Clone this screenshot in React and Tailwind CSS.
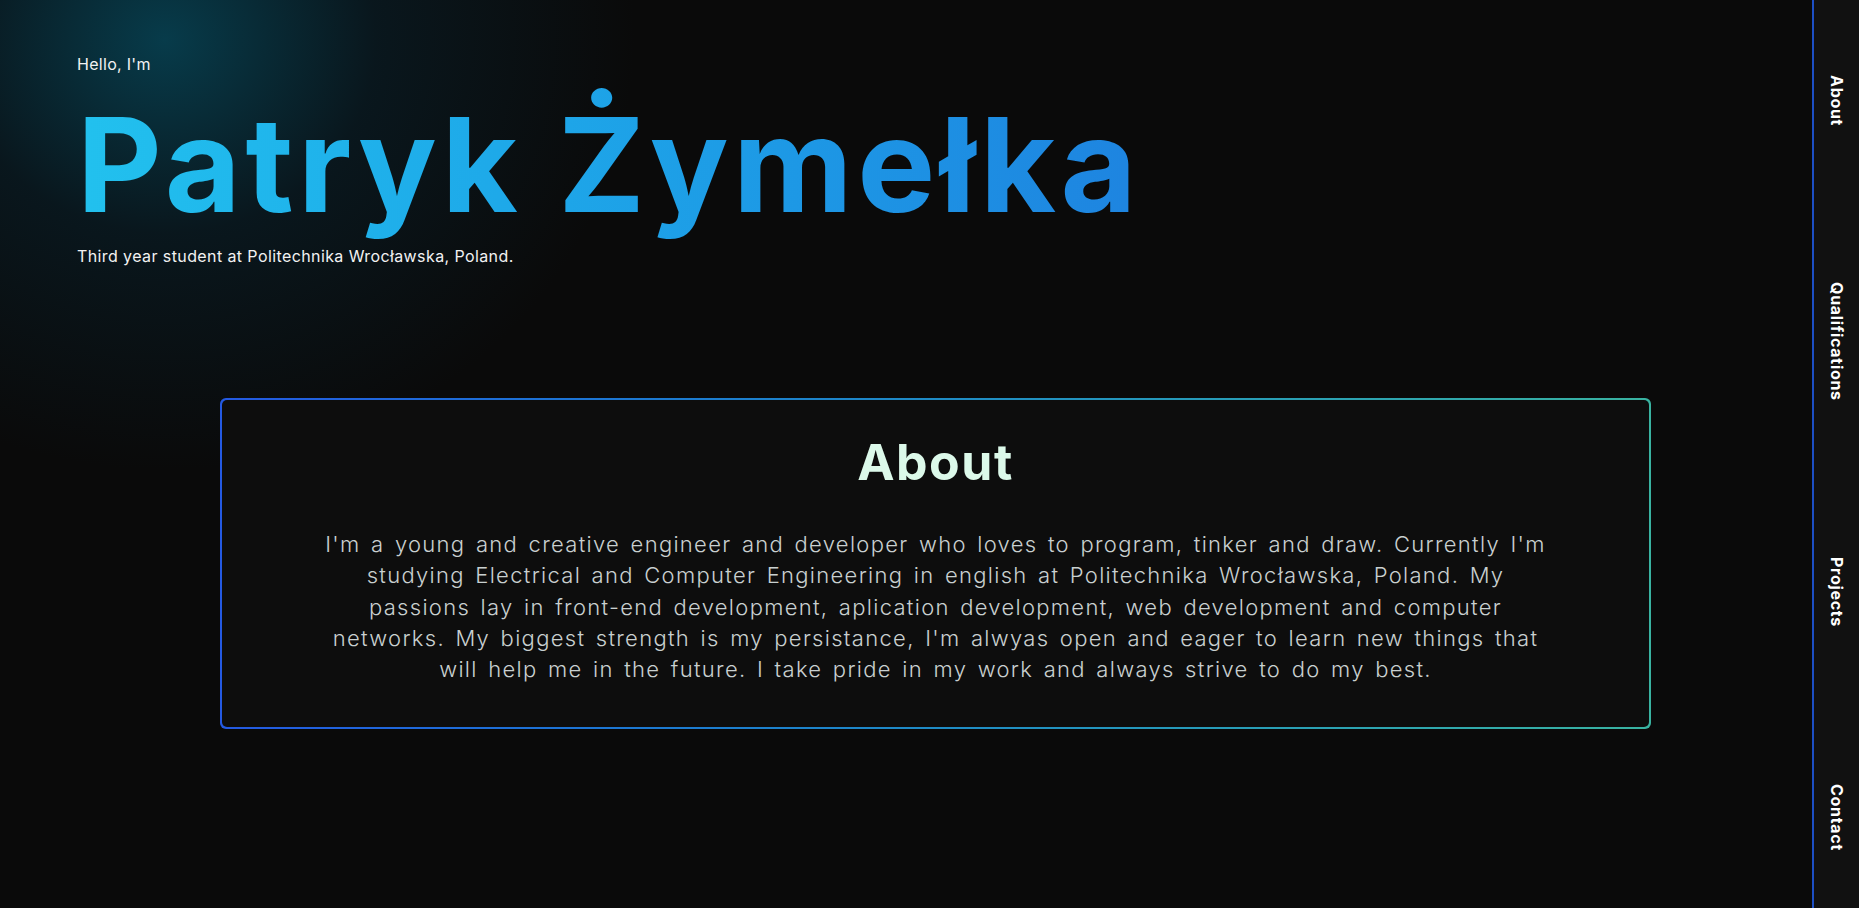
const navItems = [
  { label: "About", h: "h-[202px]" },
  { label: "Qualifications", h: "h-[278px]" },
  { label: "Projects", h: "h-[224px]" },
  { label: "Contact", h: "h-[204px] pt-[24px]" },
];

const aboutLines = [
  "I'm a young and creative engineer and developer who loves to program, tinker and draw. Currently I'm",
  "studying Electrical and Computer Engineering in english at Politechnika Wrocławska, Poland. My",
  "passions lay in front-end development, aplication development, web development and computer",
  "networks. My biggest strength is my persistance, I'm alwyas open and eager to learn new things that",
  "will help me in the future. I take pride in my work and always strive to do my best.",
];

export default function App() {
  return (
    <div className="flex h-[908px] w-full overflow-hidden bg-[#0a0a0a] font-['Inter','Liberation_Sans',sans-serif] text-white">
      {/* Main column */}
      <main className="flex flex-1 flex-col bg-[radial-gradient(ellipse_470px_430px_at_165px_40px,rgba(7,62,78,0.95),rgba(8,38,52,0.45)_45%,transparent_100%)]">
        <header className="flex flex-col pl-[77px] pt-[55px]">
          <p className="text-[16px] leading-[18px] tracking-[0.3px] text-[#f2f2f2]">Hello, I'm</p>
          <h1 className="mt-[12px] w-fit bg-gradient-to-r from-[#22c1ee] to-[#1e84e0] bg-clip-text text-[131px] font-bold leading-[160px] tracking-[4.6px] text-transparent">
            Patryk Żymełka
          </h1>
          <p className="mt-[2px] text-[16px] leading-[18px] tracking-[0.4px] text-[#f2f2f2]">
            Third year student at Politechnika Wrocławska, Poland.
          </p>
        </header>

        {/* About card */}
        <section className="ml-[220px] mt-[133px] w-[1431px] rounded-md bg-gradient-to-r from-[#2459e2] to-[#39b3a1] p-[2px]">
          <div className="flex h-[327px] flex-col items-center rounded-[5px] bg-[#0d0d0d] pt-[33px]">
            <h2 className="text-[50px] font-bold leading-[58px] tracking-[1.5px] text-[#dcf9ea]">About</h2>
            <p className="mt-[38px] text-center text-[22px] font-light leading-[31.3px] tracking-[1.3px] [word-spacing:3px] text-[#c9d0d0]">
              {aboutLines.map((line) => (
                <span key={line} className="block">
                  {line}
                </span>
              ))}
            </p>
          </div>
        </section>
      </main>

      {/* Side navigation */}
      <nav className="flex w-[47px] shrink-0 flex-col border-l-2 border-[#1d4fc4] bg-[#111111]">
        {navItems.map((item) => (
          <div key={item.label} className={`flex items-center justify-center ${item.h}`}>
            <span className="[writing-mode:vertical-rl] text-[16px] font-bold tracking-[0.7px] text-white">
              {item.label}
            </span>
          </div>
        ))}
      </nav>
    </div>
  );
}
